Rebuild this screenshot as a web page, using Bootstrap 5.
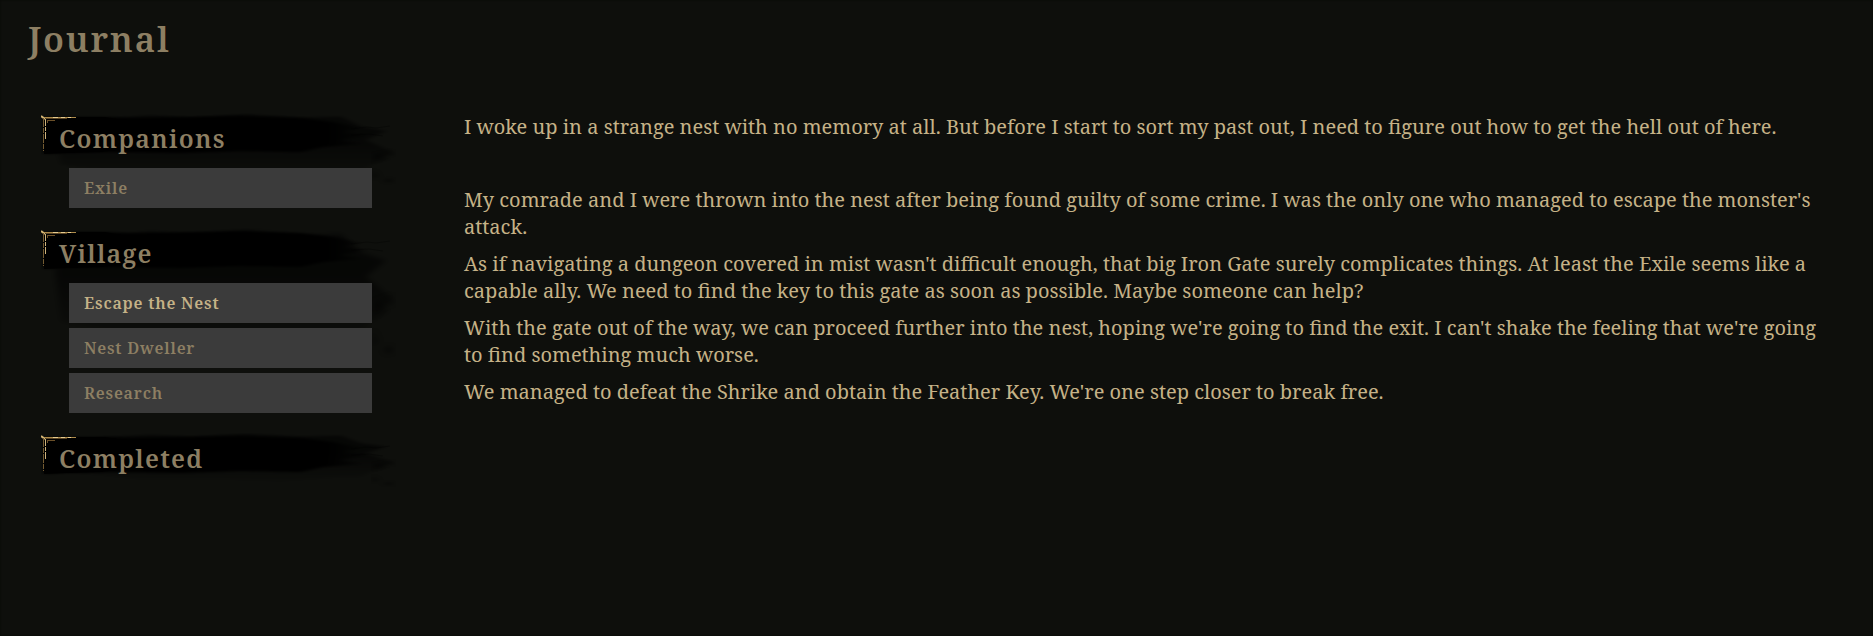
<!DOCTYPE html>
<html lang="en">
<head>
<meta charset="utf-8">
<meta name="viewport" content="width=device-width, initial-scale=1">
<title>Journal</title>
<link href="https://cdn.jsdelivr.net/npm/bootstrap@5.3.0/dist/css/bootstrap.min.css" rel="stylesheet">
<style>
  :root { --ink: #0e0f0c; --muted: #8d7f63; --gold: #c5b287; --slot: #3b3b3b; }
  body { background: var(--ink); color: var(--gold); font-family: "Noto Serif", "Droid Serif", "Liberation Serif", serif; }
  .journal { min-height: 100vh; padding: 19px 40px 20px 28px; box-shadow: inset 0 0 2px #070806; }
  .journal-title, .group-title, .quest { color: var(--muted); font-weight: 600; letter-spacing: .05em; }
  .journal-title { font-size: 35px; line-height: 40px; margin-bottom: 53px; }
  .quest-nav { flex: 0 0 357px; padding-left: 13px; }
  .quest-group { padding-bottom: 19px; }
  .group-title { font-size: 25px; line-height: 32px; padding: 10px 0 14px 18px; }
  .group-title span { position: relative; }
  .brush { left: 0; top: 1px; width: 356px; height: 76px; }
  .brush-long { height: 140px; }
  .corner { left: 0; top: 3px; width: 38px; height: 40px; }
  .quest-list { gap: 5px; padding-left: 28px; padding-right: 13px; position: relative; }
  .quest { background: var(--slot); border: 0; height: 40px; padding: 0 15px; font-size: 16px; text-align: left; }
  .quest:hover, .quest.current { color: var(--gold); }
  .entry { margin-left: 79px; padding-top: 1px; font-size: 20px; line-height: 27px; }
  .entry p { margin-bottom: 10px; }
  .entry .summary { margin-bottom: 46px; }
</style>
</head>
<body>
<svg class="position-absolute" width="0" height="0" aria-hidden="true">
  <defs>
    <filter id="soft" x="-5%" y="-30%" width="110%" height="160%"><feGaussianBlur stdDeviation="3 1"/></filter>
    <linearGradient id="fade" gradientUnits="userSpaceOnUse" x1="0" x2="335"><stop offset="0" stop-color="#000"/><stop offset=".85" stop-color="#000"/><stop offset="1" stop-color="#000" stop-opacity="0"/></linearGradient>
    <linearGradient id="drip" x2="0" y2="1"><stop offset=".4" stop-color="#000" stop-opacity=".55"/><stop offset="1" stop-color="#000" stop-opacity=".05"/></linearGradient>
    <symbol id="stroke" viewBox="0 0 356 64" preserveAspectRatio="none">
      <path d="M14 20L60 5 110 2 150 4 205 1 260 4 300 3 320 12 345 16 325 24 350 34 338 36 348 41 330 46 320 52 300 52 240 58 180 55 100 55 60 50 20 46Z" fill="url(#drip)" filter="url(#soft)"/>
      <path d="M334 36l16-3 3 4-12 2-8 5zM332 50l5 6-5 3zM343 59l7-1 2 3-7 1z" fill="#000" opacity=".4" filter="url(#soft)"/>
    </symbol>
    <symbol id="core" viewBox="0 0 356 44">
      <path d="M3 4L60 4 90 5 150 4 200 3 260 5 292 9 320 15 302 19 328 22 300 27 322 31 282 34 260 39 200 38 140 40 70 39 25 40 3 41Z" fill="url(#fade)" filter="url(#soft)"/>
      <path d="M3 4H64L80 7V36L60 39 25 40 3 41Z" fill="#000"/>
      <path d="M310 16l16-2 9 1 14-2M310 22l18-1 14 2" fill="none" stroke="#000" stroke-opacity=".3"/>
    </symbol>
    <symbol id="gilt" viewBox="0 0 38 40">
      <path d="M0 1L4 4" stroke="#d5b675" stroke-width="2"/>
      <path d="M3 2.500H35" stroke="#ae8b4b"/>
      <path d="M12 2.500h5M20 2.500h4M27 2.500h3" stroke="#e6cc91"/>
      <path d="M5 3.500H26" stroke="#5b4524"/>
      <path d="M2.500 3V36" stroke="#745b32" stroke-dasharray="9 1 5 1"/>
      <path d="M4.500 4V24" stroke="#cdb27b" stroke-dasharray="7 1 4 1"/>
      <path d="M6.500 5v3M6 5.500h8" stroke="#6b5029"/>
    </symbol>
  </defs>
</svg>

<main class="journal">
  <h1 class="journal-title">Journal</h1>
  <div class="d-flex">
    <nav class="quest-nav" aria-label="Quests">
      <section class="quest-group position-relative">
        <svg class="brush position-absolute" aria-hidden="true"><use href="#stroke" width="356" height="72"/><use href="#core" width="356" height="44"/></svg>
        <svg class="corner position-absolute" aria-hidden="true"><use href="#gilt" width="38" height="40"/></svg>
        <h2 class="group-title m-0"><span>Companions</span></h2>
        <div class="quest-list d-flex flex-column">
          <button type="button" class="quest">Exile</button>
        </div>
      </section>
      <section class="quest-group position-relative">
        <svg class="brush brush-long position-absolute" aria-hidden="true"><use href="#stroke" width="356" height="130"/><use href="#core" width="356" height="44"/></svg>
        <svg class="corner position-absolute" aria-hidden="true"><use href="#gilt" width="38" height="40"/></svg>
        <h2 class="group-title m-0"><span>Village</span></h2>
        <div class="quest-list d-flex flex-column">
          <button type="button" class="quest current" aria-current="true">Escape the Nest</button>
          <button type="button" class="quest">Nest Dweller</button>
          <button type="button" class="quest">Research</button>
        </div>
      </section>
      <section class="quest-group position-relative">
        <svg class="brush position-absolute" aria-hidden="true"><use href="#stroke" width="356" height="54"/><use href="#core" width="356" height="44"/></svg>
        <svg class="corner position-absolute" aria-hidden="true"><use href="#gilt" width="38" height="40"/></svg>
        <h2 class="group-title m-0"><span>Completed</span></h2>
      </section>
    </nav>
    <article class="entry flex-fill">
      <p class="summary">I woke up in a strange nest with no memory at all. But before I start to sort my past out, I need to figure out how to get the hell out of here.</p>
      <p>My comrade and I were thrown into the nest after being found guilty of some crime. I was the only one who managed to escape the monster's attack.</p>
      <p>As if navigating a dungeon covered in mist wasn't difficult enough, that big Iron Gate surely complicates things. At least the Exile seems like a capable ally. We need to find the key to this gate as soon as possible. Maybe someone can help?</p>
      <p>With the gate out of the way, we can proceed further into the nest, hoping we're going to find the exit. I can't shake the feeling that we're going to find something much worse.</p>
      <p>We managed to defeat the Shrike and obtain the Feather Key. We're one step closer to break free.</p>
    </article>
  </div>
</main>
<script src="https://cdn.jsdelivr.net/npm/bootstrap@5.3.0/dist/js/bootstrap.bundle.min.js"></script>
</body>
</html>
